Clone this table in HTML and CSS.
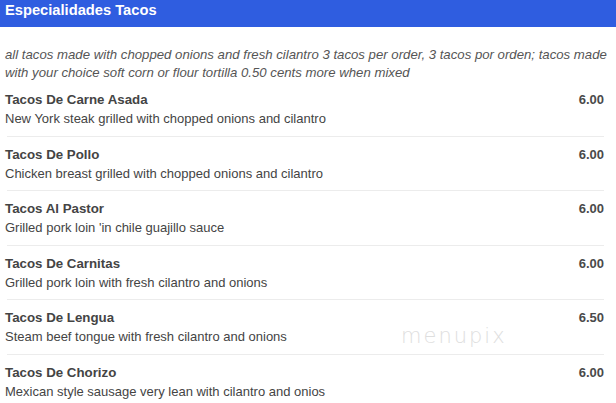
FILE: index.html
```html
<!DOCTYPE html>
<html>
<head>
<meta charset="utf-8">
<link rel="stylesheet" href="styles.css">
</head>
<body>
<div class="page">
  <div class="header">Especialidades Tacos</div>
  <p class="intro">all tacos made with chopped onions and fresh cilantro 3 tacos per order, 3 tacos por orden; tacos made with your choice soft corn or flour tortilla 0.50 cents more when mixed</p>
  <ul class="items">
    <li class="item">
      <div class="row"><span class="name">Tacos De Carne Asada</span><span class="price">6.00</span></div>
      <div class="desc">New York steak grilled with chopped onions and cilantro</div>
    </li>
    <li class="item">
      <div class="row"><span class="name">Tacos De Pollo</span><span class="price">6.00</span></div>
      <div class="desc">Chicken breast grilled with chopped onions and cilantro</div>
    </li>
    <li class="item">
      <div class="row"><span class="name">Tacos Al Pastor</span><span class="price">6.00</span></div>
      <div class="desc">Grilled pork loin 'in chile guajillo sauce</div>
    </li>
    <li class="item">
      <div class="row"><span class="name">Tacos De Carnitas</span><span class="price">6.00</span></div>
      <div class="desc">Grilled pork loin with fresh cilantro and onions</div>
    </li>
    <li class="item">
      <div class="row"><span class="name">Tacos De Lengua</span><span class="price">6.50</span></div>
      <div class="desc">Steam beef tongue with fresh cilantro and onions</div>
    </li>
    <li class="item">
      <div class="row"><span class="name">Tacos De Chorizo</span><span class="price">6.00</span></div>
      <div class="desc">Mexican style sausage very lean with cilantro and onios</div>
    </li>
  </ul>
  <div class="watermark">menupix</div>
</div>
</body>
</html>
```
FILE: styles.css
```css
html, body {
  margin: 0;
  padding: 0;
  background: #fff;
}
.page {
  position: relative;
  width: 616px;
  font-family: "Liberation Sans", Arial, sans-serif;
  color: #444;
}
.header {
  background: #2f5de0;
  color: #fff;
  font-weight: bold;
  font-size: 14.7px;
  height: 27px;
  line-height: 20px;
  padding-left: 5px;
}
.intro {
  margin: 19px 0 0 0;
  padding: 0 8px 0 5px;
  font-size: 13.2px;
  font-style: italic;
  line-height: 18px;
  color: #555;
}
.items {
  list-style: none;
  margin: 0;
  padding: 0 12px 0 5px;
}
.item {
  padding: 9px 0 6.5px 0;
  border-bottom: 1px solid #ececec;
  margin-left: 2px;
}
.item .row {
  display: flex;
  justify-content: space-between;
  margin-left: -2px;
}
.name {
  font-weight: bold;
  font-size: 13.3px;
  line-height: 18px;
  color: #444;
}
.price {
  font-weight: bold;
  font-size: 13px;
  line-height: 18px;
  color: #4a4a4a;
}
.desc {
  margin-left: -2px;
  font-size: 13px;
  line-height: 20px;
  color: #444;
}
.watermark {
  position: absolute;
  left: 401px;
  top: 324px;
  font-family: "DejaVu Sans", sans-serif;
  font-weight: 200;
  font-size: 21px;
  letter-spacing: 2px;
  color: #dedede;
}
```
